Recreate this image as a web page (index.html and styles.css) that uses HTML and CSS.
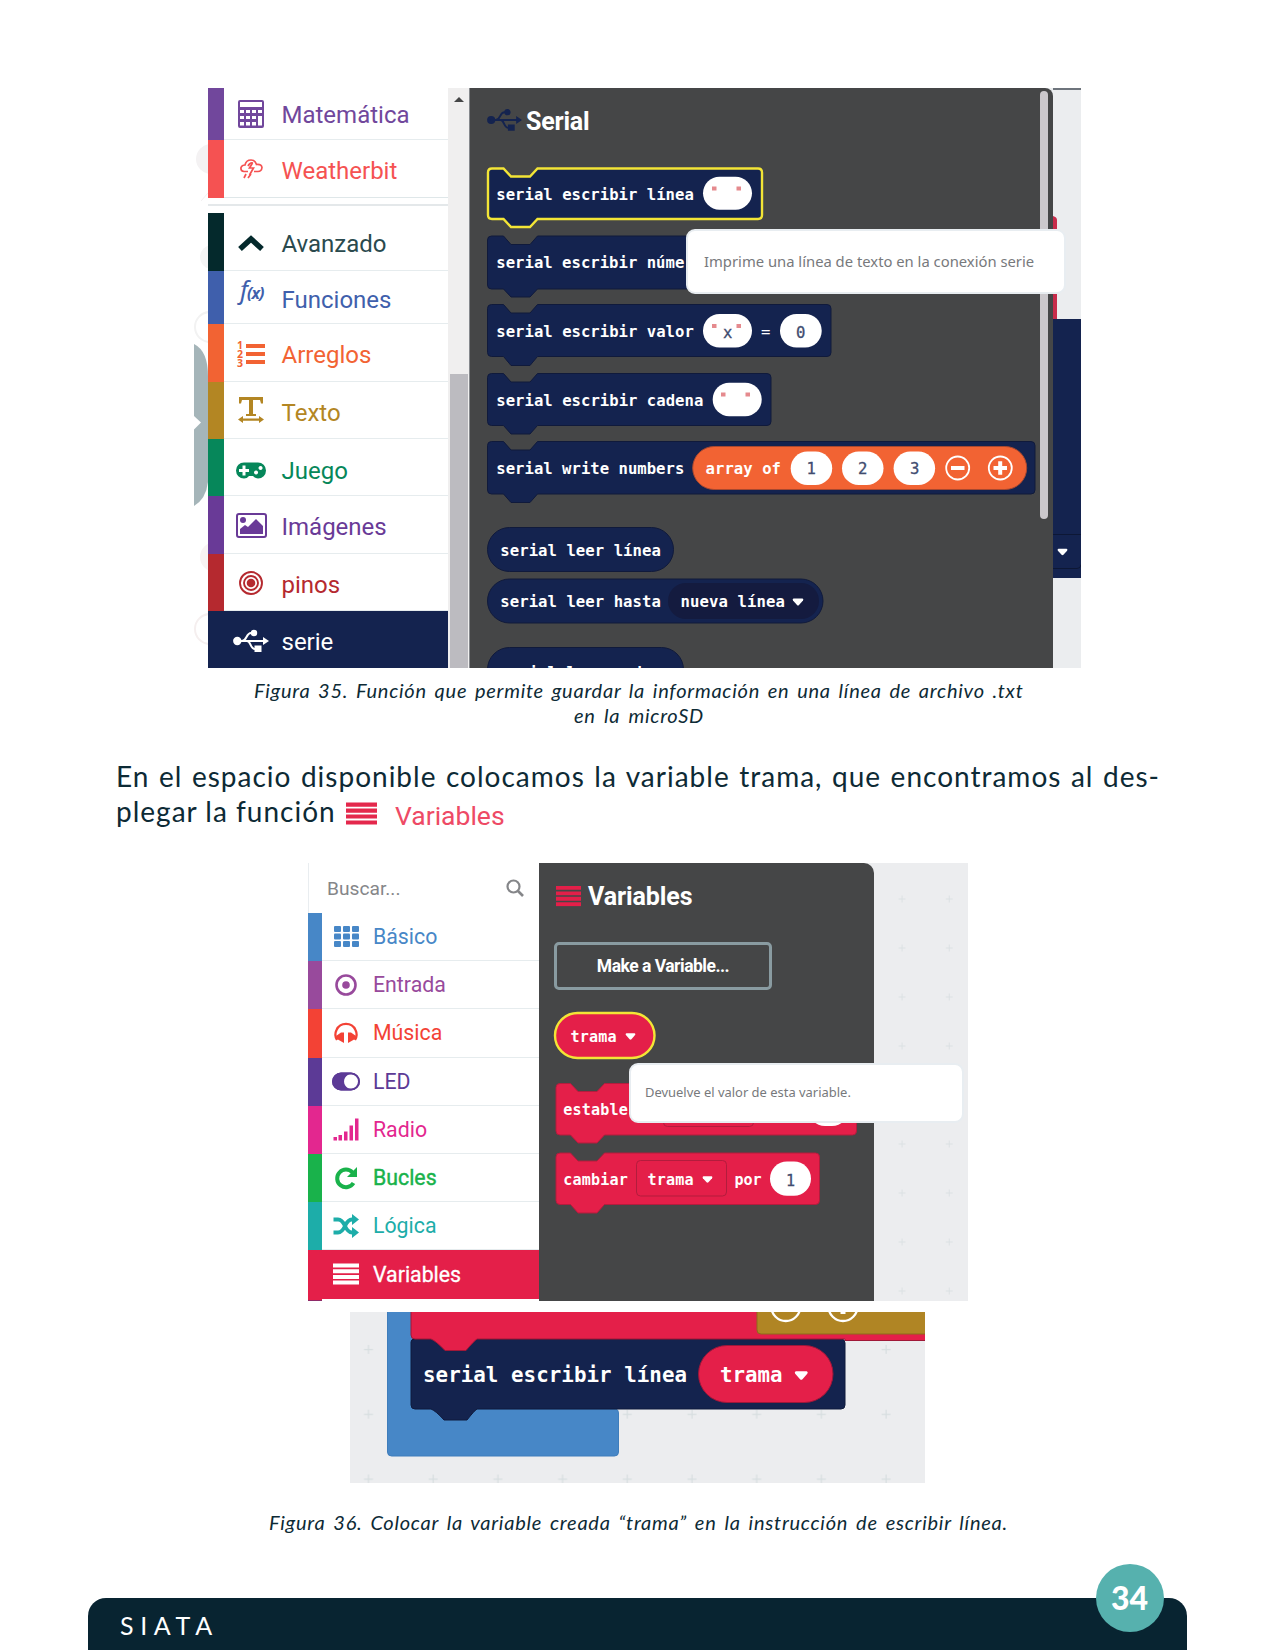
FILE: index.html
```html
<!DOCTYPE html>
<html lang="es">
<head>
<meta charset="utf-8">
<title>SIATA</title>
<link rel="stylesheet" href="styles.css">
</head>
<body>
<svg class="defs" aria-hidden="true">
  <defs>
    <symbol id="usb" viewBox="0 0 36 24"><circle cx="4.3" cy="12" r="4.2"/><path d="M4 12H31M9 12C14 12 13 4 18 4H21M14 12C18 12 17 20 22 20H24" fill="none" stroke="currentColor" stroke-width="2"/><circle cx="21" cy="4" r="3.2"/><path d="M21.5 16.5h7v6.500h-7zM30 8l6 4-6 4z"/></symbol>
    <symbol id="bars" viewBox="0 0 26 22"><path d="M0 0.500h26v4H0zM0 6.200h26v4H0zM0 11.900h26v4H0zM0 17.600h26v4H0z"/></symbol>
    <symbol id="caret" viewBox="0 0 12 8"><path d="M1.500.500h9q1.500.5.500 2L7 7q-1 1-2 0L1 2.500q-1-1.500.5-2z"/></symbol>
    <pattern id="dots-a" x="878" y="874.500" width="47.200" height="49" patternUnits="userSpaceOnUse"><path d="M20.500 24.500h7M24 21v7" stroke="#dbe1e3" stroke-width="1"/></pattern>
    <pattern id="dots-b" x="336.500" y="1317" width="64.700" height="64.800" patternUnits="userSpaceOnUse"><path d="M27.500 32.500h9M32 28v9" stroke="#d7dee0" stroke-width="1.200"/></pattern>
  </defs>
</svg>
<main class="page">
  <figure class="shot shot-serial">
    <svg class="edge" viewBox="194 88 14 580">
      <circle cx="211" cy="159" r="15" fill="#f4f2f3"/><circle cx="212" cy="257" r="12" fill="#f5f5f5"/>
      <path d="M201 201l7-8" stroke="#f3f1f2" fill="none"/><circle cx="210" cy="327" r="15" fill="none" stroke="#f2f2f2" stroke-width="2"/>
      <path d="M194 344Q208 351 208 376V482Q206 499 194 506z" fill="#a5b5b9"/><path d="M194 416l7 6.500-7 7z" fill="#fff"/>
      <circle cx="215" cy="557" r="15" fill="#f8f3f3"/><circle cx="210" cy="629" r="15" fill="none" stroke="#f5efef" stroke-width="2"/>
    </svg>
    <nav class="toolbox toolbox-lg">
      <div class="cat math"><svg viewBox="0 0 36 34"><path fill-rule="evenodd" d="M7 3h22q2 0 2 2v24q0 2-2 2H7q-2 0-2-2V5q0-2 2-2zM7 5v5h22V5zM7 13v3h4v-3zM13 13v3h4v-3zM19 13v3h4v-3zM25 13v3h4v-3zM7 19v3h4v-3zM13 19v3h4v-3zM19 19v3h4v-3zM7 25v3.500h4V25zM13 25v3.500h4V25zM19 25v3.500h4V25zM25 19v9.500h4V19z"/></svg><span>Matemática</span></div>
      <div class="cat weather"><svg viewBox="0 0 36 34"><g fill="none" stroke="currentColor" stroke-width="1.700"><path d="M15 19.500H11q-3.500-.5-3-4 1-2.500 4-2.500 1-5 6-5 4 0 5.500 4.500 5-.5 5.500 3-.5 4-4 4h-4M15 14q2-4 5-3"/><path d="M19.500 11l-3 5h4l-4 7M13 22l-2 4M18 22l-3 4"/></g></svg><span>Weatherbit</span></div>
      <div class="rule"></div>
      <div class="cat advanced"><svg viewBox="0 0 36 34"><path d="M7 25L18 15 29 25" fill="none" stroke="currentColor" stroke-width="5.500"/></svg><span>Avanzado</span></div>
      <div class="cat functions"><svg viewBox="0 0 36 34"><text x="7" y="19" class="fx">f</text><text x="14" y="19" class="fx-arg">(x)</text></svg><span>Funciones</span></div>
      <div class="cat arrays"><svg viewBox="0 0 36 34"><path d="M13 7h19v4H13zM13 15h19v4H13zM13 23h19v4H13z"/><text x="4" y="12" class="num">1</text><text x="4" y="21" class="num">2</text><text x="4" y="30" class="num">3</text></svg><span>Arreglos</span></div>
      <div class="cat text"><svg viewBox="0 0 36 34"><path d="M6 3H30V9.500H28L27 6H20V20H23V22H13V20H16V6H9L8 9.500H6zM10 24.500H26V22l5 3.500-5 3.500V26.700H10V29L5 25.500 10 22z"/></svg><span>Texto</span></div>
      <div class="cat game"><svg viewBox="0 0 36 34"><path fill-rule="evenodd" d="M11 8.500H25a8 8 0 0 1 0 16Q22 24.500 20 22H16Q14 24.500 11 24.500A8 8 0 0 1 11 8.500zM9.500 11.500V15H6v3h3.500v3.500h3V18H16v-3H12.500v-3.500zM23 16.500a2 2 0 1 0 .1 0zM27.500 12a2 2 0 1 0 .1 0z"/></svg><span>Juego</span></div>
      <div class="cat images"><svg viewBox="0 0 36 34"><rect x="4" y="5" width="29" height="23" rx="2" fill="none" stroke="currentColor" stroke-width="2"/><circle cx="10" cy="11" r="3"/><path d="M7 25V20l5-4 3 2 8-8 7 7v8z"/></svg><span>Imágenes</span></div>
      <div class="cat pins"><svg viewBox="0 0 36 34"><g fill="none" stroke="currentColor" stroke-width="1.900"><circle cx="18" cy="16" r="11"/><circle cx="18" cy="16" r="7"/></g><circle cx="18" cy="16" r="4.300"/></svg><span>pinos</span></div>
      <div class="cat serial"><svg viewBox="0 0 36 34"><use href="#usb" y="5" width="36" height="24"/></svg><span>serie</span></div>
    </nav>
    <div class="scrollbar"><svg viewBox="0 0 10 5"><path d="M0 5L5 0l5 5z"/></svg><div class="thumb"></div></div>
    <section class="flyout flyout-lg">
      <header><svg class="i-usb" viewBox="0 0 36 24"><use href="#usb"/></svg><h2>Serial</h2></header>
      <svg class="blocks" viewBox="470 160 583 508">
        <g class="navy">
          <path class="selected" d="M492 168.500H503.500L511 176.500H530L537.500 168.500H758q4 0 4 4V215q0 4-4 4H537.500L530 227H511L503.500 219H492q-4 0-4-4V172.500q0-4 4-4z"/>
          <path d="M491.500 236H503.500L511 244.500H530L537.500 236H780V289H537.500L530 297H511L503.500 289H491.500q-4 0-4-4V240q0-4 4-4z"/>
          <path d="M491.500 304.500H503.500L511 313H530L537.500 304.500H827q4 0 4 4V352.500q0 4-4 4H537.500L530 365.500H511L503.500 356.500H491.500q-4 0-4-4V308.500q0-4 4-4z"/>
          <path d="M491.500 373.500H503.500L511 382H530L537.500 373.500H767q4 0 4 4V421.500q0 4-4 4H537.500L530 434H511L503.500 425.500H491.500q-4 0-4-4V377.500q0-4 4-4z"/>
          <path d="M491.500 441.500H503.500L511 450H530L537.500 441.500H1031q4 0 4 4V490q0 4-4 4H537.500L530 502.500H511L503.500 494H491.500q-4 0-4-4V445.500q0-4 4-4z"/>
          <rect x="487.500" y="527.500" width="186" height="44" rx="22"/>
          <rect x="487.500" y="579" width="335.500" height="44" rx="22"/>
          <rect x="487.500" y="647.500" width="196" height="44" rx="22"/>
        </g>
        <rect x="668" y="583" width="151" height="36" rx="18" fill="#141b3f"/>
        <rect x="692.700" y="446.500" width="334" height="43" rx="21.500" fill="#f26333" stroke="#a8482f"/>
        <g fill="#fff">
          <rect x="703" y="176.700" width="49" height="33" rx="16.500"/><rect x="703" y="314" width="49" height="33.500" rx="16.500"/><rect x="780" y="314" width="41.700" height="33.500" rx="16.500"/><rect x="712.700" y="382.700" width="49" height="33.500" rx="16.500"/>
          <rect x="790.700" y="451.500" width="41.500" height="33.500" rx="16.700"/><rect x="842" y="451.500" width="41.500" height="33.500" rx="16.700"/><rect x="893.600" y="451.500" width="41.500" height="33.500" rx="16.700"/>
          <path d="M951 466h13.500v4H951zM993.500 466h13.500v4H993.500zM998.200 461.200h4v13.500h-4z"/>
          <use href="#caret" x="792" y="598" width="12" height="8"/>
        </g>
        <g fill="none" stroke="#fff" stroke-width="1.800"><circle cx="957.700" cy="468" r="11.500"/><circle cx="1000.300" cy="468" r="11.500"/></g>
        <path fill="#e58a8e" d="M712 186.500h4.500v4H712zM736.500 186.500h4.500v4H736.500zM712 324h4.500v4H712zM736.500 324h4.500v4H736.500zM721 392.500h4.500v4H721zM745.500 392.500h4.500v4H745.500z"/>
        <g class="code">
          <text x="496.300" y="199.700" textLength="197.500">serial escribir línea</text>
          <text x="496.300" y="268.300" textLength="188">serial escribir núme</text>
          <text x="496.300" y="337.300" textLength="197.500">serial escribir valor</text>
          <text x="761" y="337.300" class="thin">=</text>
          <text x="496.300" y="405.600" textLength="207">serial escribir cadena</text>
          <text x="496.300" y="474" textLength="188">serial write numbers</text>
          <text x="705.500" y="474" textLength="75.500">array of</text>
          <text x="500.300" y="555.500" textLength="160.500">serial leer línea</text>
          <text x="500.300" y="606.800" textLength="160.500">serial leer hasta</text>
          <text x="680.500" y="606.800" textLength="104.500">nueva línea</text>
          <text x="500.300" y="677.500" textLength="170">serial leer cadena</text>
          <g class="value"><text x="723" y="337.500">x</text><text x="796" y="337.500">0</text><text x="806.500" y="474.300">1</text><text x="858" y="474.300">2</text><text x="910" y="474.300">3</text></g>
        </g>
      </svg>
      <div class="flyout-thumb"></div>
    </section>
    <svg class="stage" viewBox="1053 88 28 580">
      <path fill="#ebedef" d="M1053 88h28v580h-28z"/><path fill="#6e747c" d="M1053 88h28v2h-28z"/>
      <path fill="#c82c4b" d="M1053 216q4 1 4 4v99h-4z"/><path fill="#14234f" d="M1053 319h28v259h-28z"/>
      <path d="M1053 534.500h28M1053 568.500h24q4 0 4-4" fill="none" stroke="#0d1735"/>
      <use href="#caret" x="1057" y="548" width="11" height="8" fill="#fff"/>
    </svg>
    <div class="tip tip-serial">Imprime una línea de texto en la conexión serie</div>
  </figure>
  <p class="caption caption-35"><span>Figura 35. Función que permite guardar la información en una línea de archivo .txt</span><span class="second">en la microSD</span></p>

  <div class="body-text">
    <p class="full">En el espacio disponible colocamos la variable trama, que encontramos al des-</p>
    <p class="last"><span class="lead">plegar la función</span><svg viewBox="0 0 26 22" preserveAspectRatio="none"><use href="#bars"/></svg><span class="var-name">Variables</span></p>
  </div>

  <figure class="shot shot-variables">
    <nav class="toolbox toolbox-sm">
      <div class="search"><span>Buscar...</span><svg viewBox="0 0 18 18"><circle cx="7.500" cy="7.500" r="6" fill="none" stroke="currentColor" stroke-width="2.200"/><path d="M12 12l5 5" stroke="currentColor" stroke-width="2.600"/></svg></div>
      <div class="cat basic"><svg viewBox="0 0 28 24"><g><rect x="2" y="1" width="7" height="6" rx="1"/><rect x="11" y="1" width="7" height="6" rx="1"/><rect x="20" y="1" width="7" height="6" rx="1"/><rect x="2" y="8.500" width="7" height="6" rx="1"/><rect x="11" y="8.500" width="7" height="6" rx="1"/><rect x="20" y="8.500" width="7" height="6" rx="1"/><rect x="2" y="16" width="7" height="6" rx="1"/><rect x="11" y="16" width="7" height="6" rx="1"/><rect x="20" y="16" width="7" height="6" rx="1"/></g></svg><span>Básico</span></div>
      <div class="cat input"><svg viewBox="0 0 28 24"><circle cx="14" cy="12" r="9.500" fill="none" stroke="currentColor" stroke-width="2.600"/><circle cx="14" cy="12" r="3.800"/></svg><span>Entrada</span></div>
      <div class="cat music"><svg viewBox="0 0 28 24"><path d="M5 19Q2 14 4.500 9A10.500 10.500 0 0 1 23.500 9Q26 14 23 19" fill="none" stroke="currentColor" stroke-width="2.300"/><path d="M4 15L9 11.500h3V22L5 18zM24 15l-5-3.500H16V22l7-4z"/></svg><span>Música</span></div>
      <div class="cat led"><svg viewBox="0 0 28 24"><rect x="1" y="4.500" width="26" height="16" rx="8" fill="none" stroke="currentColor" stroke-width="2"/><path fill-rule="evenodd" d="M9 3.500H19a9 9 0 0 1 0 18H9a9 9 0 0 1 0-18zM19.500 5a7.500 7.500 0 1 0 .1 0z"/></svg><span>LED</span></div>
      <div class="cat radio"><svg viewBox="0 0 28 24"><path d="M1.500 20h3.500v3.500H1.500zM6.500 18h3.500v5.500H6.500zM12 14.500h3.500v9H12zM17.500 8.500H21v15h-3.500zM23 1.500h3.500v22H23z"/></svg><span>Radio</span></div>
      <div class="cat loops"><svg viewBox="0 0 28 24"><path d="M20.500 6.500A8.800 8.800 0 1 0 21.500 17" fill="none" stroke="currentColor" stroke-width="4"/><path d="M25 1v10H15z"/></svg><span>Bucles</span></div>
      <div class="cat logic"><svg viewBox="0 0 28 24"><path d="M1.500 5.500H6Q10 5.500 13 12T20 18.500H22M1.500 18.500H6Q10 18.500 13 12T20 5.500H22" fill="none" stroke="currentColor" stroke-width="3.800"/><path d="M20 0l7 5.500L20 11zM20 13l7 5.500L20 24z"/></svg><span>Lógica</span></div>
      <div class="cat variables"><svg viewBox="0 0 28 24"><use href="#bars" x="1" y="1" width="26" height="22"/></svg><span>Variables</span></div>
      <div class="next"></div>
    </nav>
    <section class="flyout flyout-sm">
      <header><svg class="i-bars" viewBox="0 0 26 22"><use href="#bars"/></svg><h2>Variables</h2></header>
      <button type="button">Make a Variable...</button>
      <svg class="blocks" viewBox="539 1000 335 301">
        <g class="crimson">
          <rect class="selected" x="555" y="1013" width="99.500" height="45" rx="22.500"/>
          <path d="M560 1083.500H570.500L578 1091.500H597L604.500 1083.500H852.500q4 0 4 4V1131q0 4-4 4H604.500L597 1143H578L570.500 1135H560q-4 0-4-4V1087.500q0-4 4-4z"/>
          <path d="M560 1153H570.500L578 1161H597L604.500 1153H815.500q4 0 4 4V1200.500q0 4-4 4H604.500L597 1213H578L570.500 1204.500H560q-4 0-4-4V1157q0-4 4-4z"/>
          <rect x="663.500" y="1091" width="90" height="35.500" rx="4"/><rect x="636.500" y="1160.500" width="90" height="35.500" rx="4"/>
        </g>
        <g fill="#fff"><rect x="808" y="1092" width="41" height="34" rx="17"/><rect x="770" y="1161.500" width="41" height="34.300" rx="17"/>
          <use href="#caret" x="625" y="1032.500" width="11" height="8"/><use href="#caret" x="702" y="1175.500" width="11" height="8"/></g>
        <g class="code small">
          <text x="570.500" y="1042" textLength="46">trama</text>
          <text x="563.300" y="1115" textLength="64.500">estable</text>
          <text x="563.300" y="1185" textLength="64.500">cambiar</text>
          <text x="647.500" y="1185" textLength="46">trama</text>
          <text x="734.500" y="1185" textLength="27">por</text>
          <text class="value" x="786" y="1185.500">1</text>
        </g>
      </svg>
    </section>
    <svg class="grid" viewBox="874 863 94 438"><path fill="url(#dots-a)" d="M874 863h94v438h-94z"/></svg>
    <div class="tip tip-variable">Devuelve el valor de esta variable.</div>
  </figure>

  <figure class="shot shot-result">
    <svg viewBox="350 1312 575 171">
      <path fill="#ecedef" d="M350 1312h575v171H350z"/><path fill="url(#dots-b)" d="M350 1312h575v171H350z"/>
      <path fill="#4787c7" stroke="#3f7dbb" d="M387.500 1310H420V1409H615q3.500 0 3.500 4V1452q0 4-4 4H391.500q-4 0-4-4z"/>
      <path fill="#14234e" stroke="#0f1a3c" d="M411 1342q0-3 4-3H841q4 0 4 4V1405q0 4-4 4H477Q474 1411 467 1420H444Q436 1411 431 1409H415q-4 0-4-4z"/>
      <path fill="#e41f49" stroke="#a01838" d="M411 1310H930V1340.500H845V1339H477Q474 1341 466 1350.500H445Q436 1341 431 1339H415q-4 0-4-4z"/>
      <path fill="#b08524" stroke="#8e6a1a" d="M757 1310H927V1334H761q-4 0-4-4z"/>
      <g fill="none" stroke="#fff" stroke-width="2.300"><circle cx="785.800" cy="1306.500" r="14.500"/><circle cx="843" cy="1306.500" r="14.500"/></g><path fill="#fff" d="M840.500 1310h5v4h-5z"/>
      <rect x="698.500" y="1345.500" width="134.500" height="57" rx="28.500" fill="#e41f49" stroke="#9c1739"/>
      <g class="code big"><text x="423" y="1381.500" textLength="264">serial escribir línea</text><text x="720" y="1381.500" textLength="62.500">trama</text></g>
      <use href="#caret" x="794" y="1370.500" width="14.500" height="10" fill="#fff"/>
    </svg>
  </figure>
  <p class="caption caption-36"><span>Figura 36. Colocar la variable creada “trama” en la instrucción de escribir línea.</span></p>

  <footer><span class="brand">SIATA</span><span class="page-no">34</span></footer>
</main>
</body>
</html>
```
FILE: styles.css
```css
* { box-sizing: border-box; }
body { margin: 0; background: #fff; }
h2, p, figure { margin: 0; }
svg { display: block; flex: none; fill: currentColor; }
.defs { position: absolute; width: 0; height: 0; }

.page {
  display: flex;
  flex-direction: column;
  width: 1275px;
  height: 1650px;
  padding-top: 88px;
  overflow: hidden;
  color: #0d2a35;
  font-family: Lato, "Open Sans", sans-serif;
}

.shot { position: relative; display: flex; flex: none; overflow: hidden; }
.shot-serial { width: 887px; height: 580px; margin-left: 194px; }
.shot-variables { width: 660px; height: 438px; margin-left: 308px; }
.shot-result { width: 575px; height: 171px; margin: 11px 0 0 350px; }
.shot-result svg { width: 575px; height: 171px; }
.edge { width: 14px; height: 580px; }

/* Toolbox */
.toolbox { display: flex; flex-direction: column; flex: none; font-family: Roboto, sans-serif; background: #fff; }
.cat { display: flex; align-items: center; flex: none; border-bottom: 1px solid #e6ecee; position: relative; }
.cat::before { content: ""; align-self: stretch; background: var(--c); margin-bottom: -1px; }
.cat { color: var(--c); }
.toolbox-lg { width: 240px; font-size: 24px; }
.toolbox-lg .cat { height: 57px; }
.toolbox-lg .cat::before { width: 16px; }
.toolbox-lg .cat svg { width: 36px; height: 34px; margin: 0 12.500px 0 9px; overflow: visible; }
.toolbox-lg .cat span { padding-top: 5px; }
.toolbox-lg .math { --c: #71479c; height: 52px; }
.toolbox-lg .math span { padding-top: 2px; }
.toolbox-lg .weather { --c: #f55252; height: 58px; border-bottom: 1px solid #dfe7e9; }
.rule { height: 14.500px; flex: none; position: relative; border-bottom: 7px solid #fff; border-top: 6px solid #fff; background: #e4e8ea; }
.toolbox-lg .advanced { --c: #04292c; height: 58px; }
.toolbox-lg .advanced span { color: #2a4a4e; }
.toolbox-lg .functions { --c: #3f5fac; height: 53.500px; }
.toolbox-lg .functions span { padding-top: 6px; }
.toolbox-lg .arrays { --c: #f26333; height: 58px; }
.toolbox-lg .arrays svg, .toolbox-lg .text svg, .toolbox-lg .images svg, .toolbox-lg .pins svg { margin-top: 3px; }
.toolbox-lg .text { --c: #b38623; height: 56.500px; }
.toolbox-lg .text span { padding-top: 6px; }
.toolbox-lg .game { --c: #06875a; height: 57.500px; }
.toolbox-lg .game span { padding-top: 8px; }
.toolbox-lg .game svg { margin-top: 8px; }
.toolbox-lg .images { --c: #693a97; height: 58px; }
.toolbox-lg .pins { --c: #b5292f; height: 57px; }
.toolbox-lg .serial { color: #fff; background: #14234f; height: 57.500px; border-bottom-color: #50608c; }
.toolbox-lg .serial::before { background: #14234f; }
.toolbox-lg .serial svg { margin-top: 3px; }
.fx { font: italic 25px "Noto Sans", sans-serif; }
.fx-arg { font: italic 700 16px "Open Sans", sans-serif; letter-spacing: -1px; }
.num { font: 700 10.500px "Open Sans", sans-serif; }

.toolbox-sm { width: 231px; font-size: 21.300px; border-left: 1px solid #e9edf0; }
.toolbox-sm .cat { height: 48.200px; }
.toolbox-sm .cat::before { width: 14px; margin-left: -1px; }
.toolbox-sm .cat svg { width: 28px; height: 24px; margin: 0 13px 0 10px; }
.search { display: flex; align-items: center; justify-content: space-between; height: 50px; flex: none; padding: 0 15px 0 18px; color: #858689; font-size: 19.200px; }
.search svg { width: 18px; height: 18px; }
.basic { --c: #4787c7; }
.input { --c: #984a9c; }
.music { --c: #f34235; }
.led { --c: #5c3a96; }
.radio { --c: #e3278f; }
.loops { --c: #19b24b; }
.logic { --c: #1dada9; }
.toolbox-sm .loops span { -webkit-text-stroke: .4px currentColor; }
.toolbox-sm .variables { --c: #e41f49; background: var(--c); color: #fff; border: 0; }
.toolbox-sm .variables span { -webkit-text-stroke: .3px #fff; }
.next { height: 2.400px; margin-left: -1px; width: 14px; background: #8e2a68; margin-top: 0; }

.scrollbar { display: flex; flex-direction: column; flex: none; width: 22px; padding: 9px 2px 0; background: #f0efef; border-right: 1px solid #85888c; color: #454647; }
.scrollbar svg { width: 10px; height: 5px; margin-left: 4px; }
.scrollbar .thumb { margin-top: 272px; flex: 1; width: 18px; background: #bcbbc0; }

/* Flyouts */
.flyout { position: relative; display: flex; flex-direction: column; flex: none; background: #454647; color: #fff; }
.flyout header { display: flex; align-items: center; }
.flyout h2 { font: 700 25px/30px Roboto, sans-serif; }
.flyout-lg { width: 583px; border-top-right-radius: 8px; }
.flyout-lg header { height: 72px; padding: 0 0 8px 17px; }
.flyout-lg h2 { margin-left: 4px; padding-top: 3px; letter-spacing: -.2px; }
.i-usb { width: 35px; height: 24px; color: #14234f; }
.flyout-lg .blocks { width: 583px; height: 508px; }
.flyout-thumb { position: absolute; right: 5px; top: 3px; width: 8.500px; height: 428px; border-radius: 4px; background: #cbc8cc; }
.flyout-sm { width: 335px; border-top-right-radius: 10px; background: #454647; }
.flyout-sm header { height: 79px; padding: 0 0 13px 17px; }
.flyout-sm h2 { margin-left: 7px; padding-top: 2px; letter-spacing: -.1px; }
.i-bars { width: 25px; height: 22px; color: #e41f49; }
.flyout button { width: 218px; height: 48px; margin: 0 0 10px 15px; padding: 0; border: 3px solid #899ba1; border-radius: 5px; background: none; color: #fff; font: 700 17.500px Roboto, sans-serif; letter-spacing: -.5px; }
.flyout-sm .blocks { width: 335px; height: 301px; }
.shot-variables { background: #ecedef; }
.grid { width: 94px; height: 438px; }
.stage { width: 28px; height: 580px; }
.shot-serial { background: linear-gradient(#ebedef, #ebedef) right / 40px 100% no-repeat; }

.navy path, .navy rect { fill: #14234f; stroke: #101a3b; stroke-width: 1; }
.crimson path, .crimson rect { fill: #e41f49; stroke: #b31c3d; stroke-width: 1; }
.navy .selected, .crimson .selected { stroke: #f3e536; stroke-width: 2.400; }
.code { font: 700 15.600px "DejaVu Sans Mono", monospace; fill: #fff; }
.code.small { font-size: 15.100px; }
.code.big { font-size: 20.800px; }
.code .thin { font-weight: 400; }
.code .value { font-weight: 400; fill: #414c70; stroke: #414c70; stroke-width: .3; }

.tip { position: absolute; display: flex; align-items: center; border: 2px solid #e8edf1; border-radius: 9px; background: #fff; color: #77797c; font-family: "Noto Sans", sans-serif; white-space: nowrap; }
.tip-serial { left: 491.500px; top: 140.500px; width: 380px; height: 65.500px; padding: 0 0 0 16.500px; font-size: 14.800px; }
.tip-variable { left: 320.500px; top: 200px; width: 335px; height: 59.500px; padding: 0 0 1px 14.500px; font-size: 12.950px; }

/* Text */
.caption { flex: none; font-size: 20px; line-height: 24.500px; font-style: italic; letter-spacing: .75px; white-space: nowrap; }
.caption span { display: block; text-align-last: justify; }
.caption-35 { width: 769.500px; height: 91px; margin-left: 254px; padding-top: 10px; }
.caption-35 .second { width: 130px; margin-left: 320px; }
.caption-36 { width: 739px; height: 115px; margin-left: 269px; padding-top: 27px; }
.body-text { flex: none; height: 104px; margin-left: 116px; font-size: 28px; line-height: 35px; letter-spacing: 1px; }
.full { width: 1044px; text-align-last: justify; white-space: nowrap; }
.last { display: flex; white-space: nowrap; }
.lead { width: 218px; text-align-last: justify; }
.last svg { width: 31px; height: 23px; margin: 8px 18px 0 12px; color: #e4284c; }
.var-name { font: 26.500px/43px Roboto, sans-serif; letter-spacing: 0; color: #ee4a65; }

footer { position: relative; flex: none; width: 1099px; height: 52px; margin-left: 88px; border-radius: 18px 18px 0 0; background: #082431; color: #fff; padding: 12px 0 0 32px; font-size: 25px; line-height: 30px; }
.brand { letter-spacing: 6.600px; }
.page-no { position: absolute; right: 23.500px; top: -34.500px; width: 68px; height: 68px; border-radius: 50%; background: #56b1ae; font-weight: 900; font-size: 32px; line-height: 68px; text-align: center; }
```
